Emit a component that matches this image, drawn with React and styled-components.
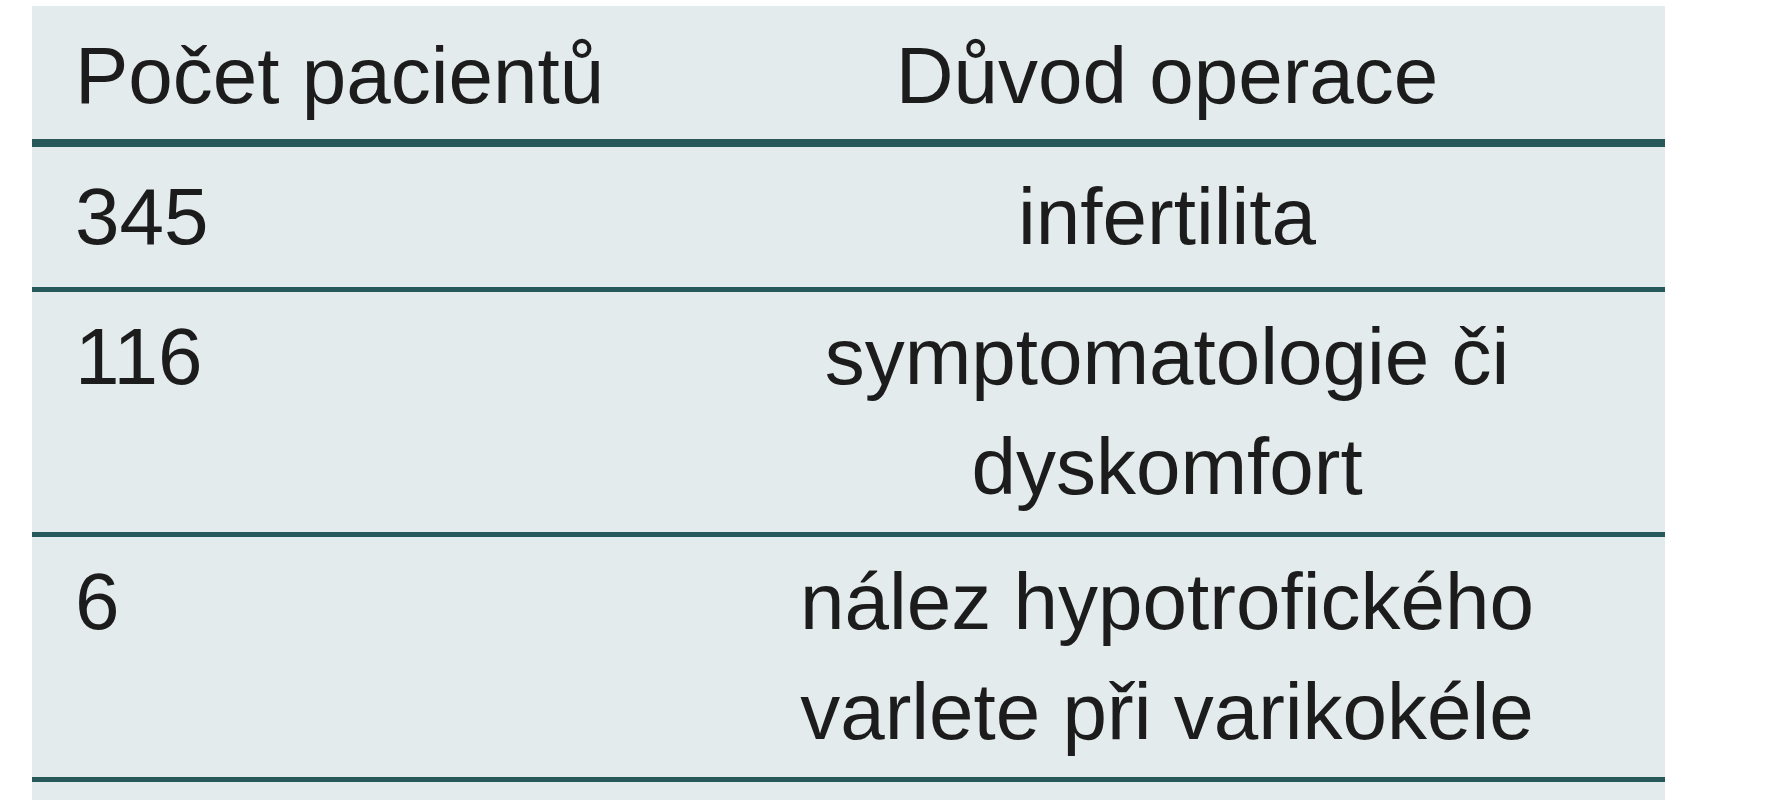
import React from 'react';
import styled, { createGlobalStyle } from 'styled-components';

const GlobalStyle = createGlobalStyle`
  html, body {
    margin: 0;
    padding: 0;
    background: #ffffff;
  }
`;

const Page = styled.div`
  width: 1775px;
  height: 800px;
  overflow: hidden;
  padding: 6px 0 0 32px;
  box-sizing: border-box;
`;

const Table = styled.div`
  width: 1633px;
  background: #e4ebed;
  padding-bottom: 40px;
  font-family: "Liberation Sans", Arial, sans-serif;
  font-size: 80px;
  line-height: 110px;
  color: #1c1c1c;
`;

const Row = styled.div`
  display: grid;
  grid-template-columns: 637px 1fr;
  padding: ${(p) => (p.$head ? '15px 0 8px' : p.$tall ? '10px 0' : '15px 0')};
  border-bottom: ${(p) => (p.$head ? '8px' : '5px')} solid #27585a;
`;

const Cell = styled.div`
  padding: ${(p) => (p.$center ? '0 60px' : '0 43px')};
  text-align: ${(p) => (p.$center ? 'center' : 'left')};
`;

const rows = [
  { count: '345', reason: 'infertilita' },
  { count: '116', reason: 'symptomatologie či dyskomfort', tall: true },
  { count: '6', reason: 'nález hypotrofického varlete při varikokéle', tall: true },
];

const App = () => {
  return (
    <>
      <GlobalStyle />
      <Page>
        <Table>
          <Row $head>
            <Cell>Počet pacientů</Cell>
            <Cell $center>Důvod operace</Cell>
          </Row>
          {rows.map((r) => (
            <Row key={r.count} $tall={r.tall}>
              <Cell>{r.count}</Cell>
              <Cell $center>{r.reason}</Cell>
            </Row>
          ))}
        </Table>
      </Page>
    </>
  );
};

export default App;
